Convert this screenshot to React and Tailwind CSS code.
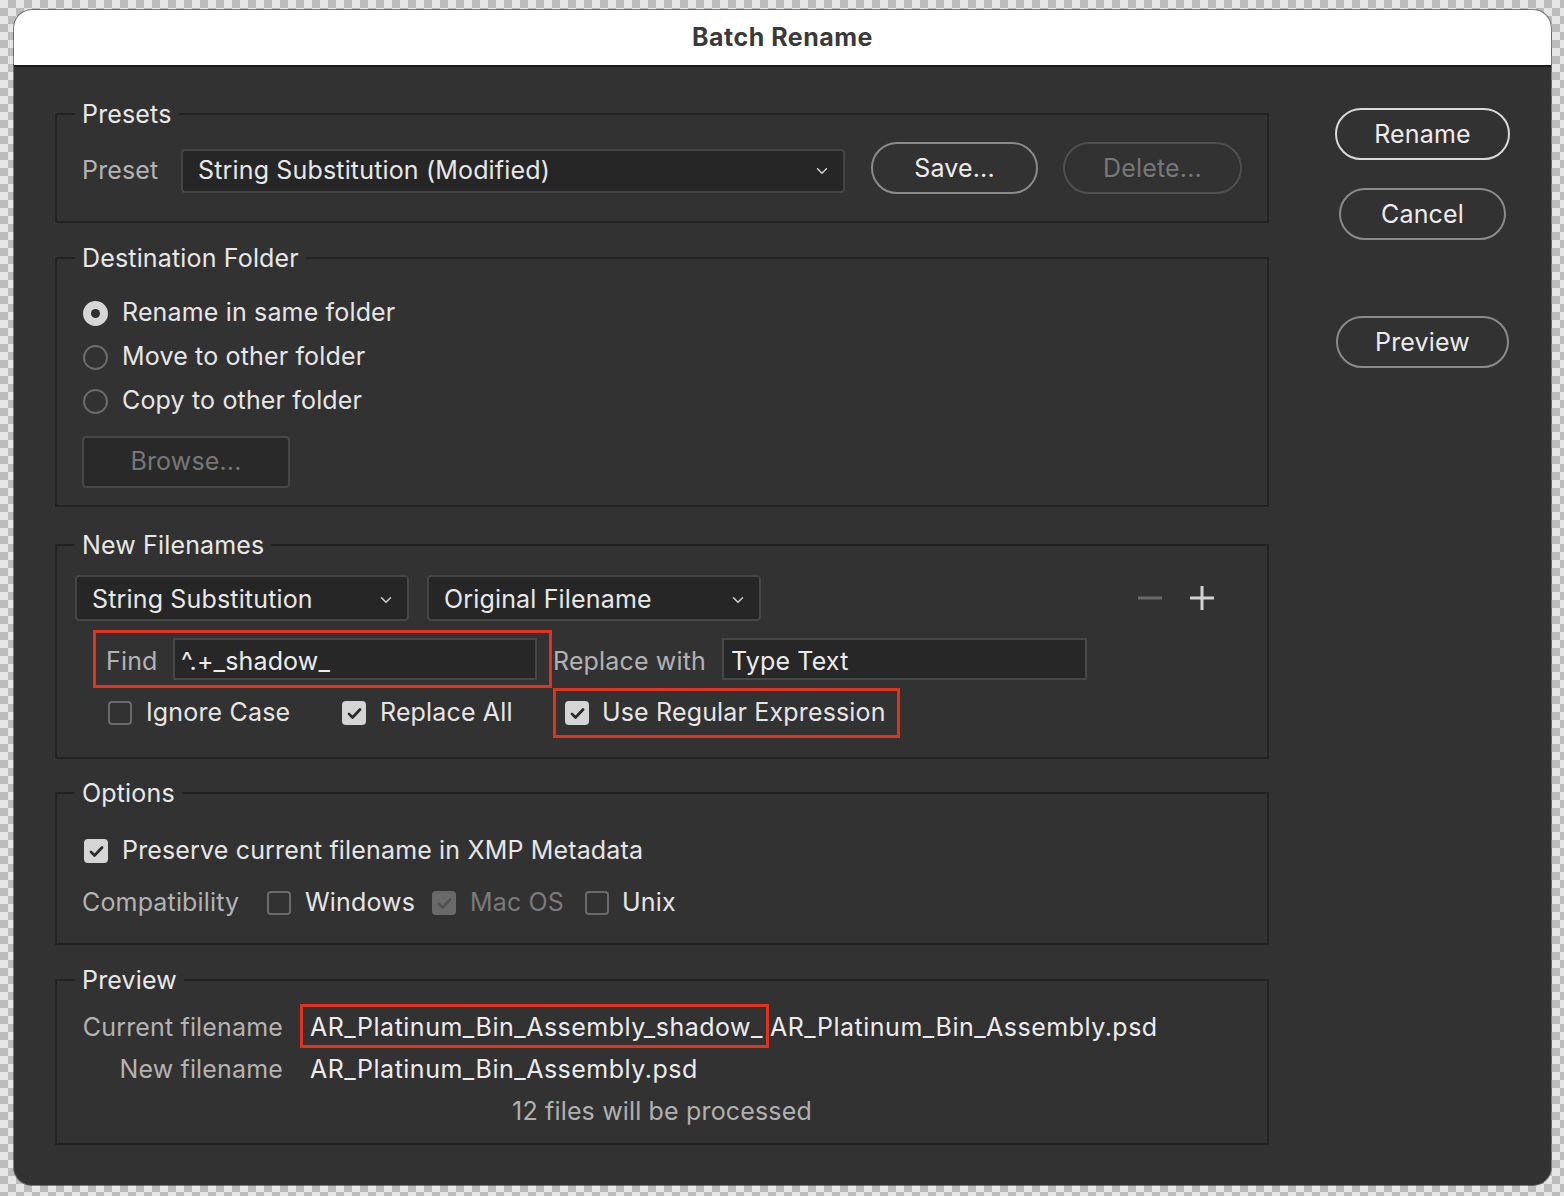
import { ChevronDown } from 'lucide-react'

function Pill({ children, tone = 'normal', className = '' }) {
  const tones = {
    strong:   'border-[#d9d9d9] text-[#ececec]',
    normal:   'border-[#8a8a8a] text-[#ececec]',
    disabled: 'border-[#4f4f4f] text-[#777777]',
  }
  return (
    <button className={`h-[52px] rounded-full border-2 text-[25px] leading-none ${tones[tone]} ${className}`}>
      {children}
    </button>
  )
}

function Select({ value, className = '' }) {
  return (
    <div className={`flex items-center justify-between rounded-[4px] border-2 border-[#454545] bg-[#262626] pl-[15px] pr-[12px] ${className}`}>
      <span className="text-[25px] text-[#e8e8e8]">{value}</span>
      <ChevronDown size={18} strokeWidth={2} className="text-[#cfcfcf]" />
    </div>
  )
}

function Check({ checked, disabled }) {
  if (!checked) return <span className="w-6 h-6 rounded-[4px] border-2 border-[#6a6a6a] shrink-0" />
  return (
    <span className={`w-6 h-6 rounded-[4px] flex items-center justify-center shrink-0 ${disabled ? 'bg-[#696969]' : 'bg-[#d5d5d5]'}`}>
      <svg viewBox="0 0 24 24" className="w-[19px] h-[19px]" fill="none" stroke={disabled ? '#525252' : '#2a2a2a'} strokeWidth="3.4" strokeLinecap="round" strokeLinejoin="round">
        <path d="M5 12.5l4.5 4.5L19 7" />
      </svg>
    </span>
  )
}

function Radio({ checked }) {
  if (checked) {
    return (
      <span className="w-[25px] h-[25px] rounded-full bg-[#d6d6d6] flex items-center justify-center shrink-0">
        <span className="w-[9px] h-[9px] rounded-full bg-[#2e2e2e]" />
      </span>
    )
  }
  return <span className="w-[25px] h-[25px] rounded-full border-2 border-[#6b6b6b] shrink-0" />
}

function Group({ title, className = '', children }) {
  return (
    <fieldset className={`border-2 border-[#232323] ${className}`}>
      <legend className="ml-[18px] px-[7px] text-[25px] leading-[28px] text-[#e8e8e8]">{title}</legend>
      {children}
    </fieldset>
  )
}

export default function App() {
  return (
    <div className="w-[1564px] h-[1196px] overflow-hidden pt-[10px] pl-[14px] bg-[image:repeating-conic-gradient(#bcbcbc_0%_25%,#e6e6e6_0%_50%)] bg-[length:16px_16px] font-['Inter','Noto_Sans',sans-serif] tracking-[0.01em]">
      <div className="w-[1537px] h-[1175px] rounded-[18px] overflow-hidden bg-[#323232] shadow-[0_0_0_1px_rgba(0,0,0,0.45)]">
        {/* Title bar */}
        <div className="h-[57px] bg-white border-b-2 border-[#1c1c1c] flex items-center justify-center">
          <span className="text-[25px] font-bold text-[#3a3a3a] tracking-[0.02em]">Batch Rename</span>
        </div>

        <div className="flex pl-[41px] pt-[33px]">
          {/* Left column */}
          <div className="w-[1214px] flex flex-col">
            <Group title="Presets" className="h-[123px]">
              <div className="flex items-center pl-[25px] pt-[14px]">
                <span className="w-[99px] text-[25px] text-[#b3b3b3]">Preset</span>
                <Select value="String Substitution (Modified)" className="w-[664px] h-[44px]" />
                <Pill className="ml-[26px] w-[167px] mb-[6px]">Save...</Pill>
                <Pill tone="disabled" className="ml-[25px] w-[179px] mb-[6px]">Delete...</Pill>
              </div>
            </Group>

            <Group title="Destination Folder" className="h-[263px] mt-[21px]">
              <div className="pl-[26px] pt-[19px] flex flex-col">
                {[
                  ['Rename in same folder', true],
                  ['Move to other folder', false],
                  ['Copy to other folder', false],
                ].map(([label, on]) => (
                  <div key={label} className="h-11 flex items-center gap-[14px]">
                    <Radio checked={on} />
                    <span className="text-[25px] text-[#e6e6e6]">{label}</span>
                  </div>
                ))}
                <button className="-ml-px mt-[13px] w-[208px] h-[52px] rounded-[4px] border-2 border-[#474747] bg-[#292929] text-[25px] text-[#777777]">
                  Browse...
                </button>
              </div>
            </Group>

            <Group title="New Filenames" className="h-[228px] mt-[24px]">
              <div className="pl-[18px] pt-[16px]">
                <div className="flex items-center h-[46px]">
                  <Select value="String Substitution" className="w-[334px] h-[46px] pt-[4px]" />
                  <Select value="Original Filename" className="ml-[18px] w-[334px] h-[46px] pt-[4px]" />
                  <svg viewBox="0 0 26 26" className="ml-[376px] w-[26px] h-[26px]">
                    <path d="M1 13h24" stroke="#6a6a6a" strokeWidth="3" />
                  </svg>
                  <svg viewBox="0 0 26 26" className="ml-[26px] w-[26px] h-[26px]">
                    <path d="M1 13h24M13 1v24" stroke="#d2d2d2" strokeWidth="3" />
                  </svg>
                </div>

                <div className="flex items-center mt-[9px]">
                  <div className="ml-[18px] w-[459px] h-[58px] border-[3px] border-[#e0321d] flex items-center pl-[10px]">
                    <span className="w-[67px] pt-[6px] text-[25px] text-[#b3b3b3]">Find</span>
                    <div className="w-[364px] h-[42px] border-2 border-[#474747] bg-[#272727] flex items-center pl-[6px] pt-[6px] text-[25px] text-[#ececec]">
                      ^.+_shadow_
                    </div>
                  </div>
                  <span className="ml-px w-[169px] pt-[6px] text-[25px] text-[#b3b3b3]">Replace with</span>
                  <div className="w-[365px] h-[42px] border-2 border-[#474747] bg-[#272727] flex items-center pl-[7px] pt-[6px] text-[25px] text-[#ececec]">
                    Type Text
                  </div>
                </div>

                <div className="flex items-center h-[50px]">
                  <div className="ml-[33px] w-[234px] flex items-center gap-[14px]">
                    <Check />
                    <span className="text-[25px] text-[#e6e6e6]">Ignore Case</span>
                  </div>
                  <div className="w-[211px] flex items-center gap-[14px]">
                    <Check checked />
                    <span className="text-[25px] text-[#e6e6e6]">Replace All</span>
                  </div>
                  <div className="w-[347px] h-[50px] border-[3px] border-[#e0321d] flex items-center gap-[13px] pl-[9px]">
                    <Check checked />
                    <span className="text-[25px] text-[#e6e6e6]">Use Regular Expression</span>
                  </div>
                </div>
              </div>
            </Group>

            <Group title="Options" className="h-[166px] mt-[20px]">
              <div className="pl-[27px] pt-[24px]">
                <div className="h-10 flex items-center gap-[14px]">
                  <Check checked />
                  <span className="text-[25px] text-[#e6e6e6]">Preserve current filename in XMP Metadata</span>
                </div>
                <div className="h-10 mt-[12px] -ml-[2px] flex items-center">
                  <span className="w-[185px] text-[25px] text-[#b3b3b3]">Compatibility</span>
                  <div className="w-[165px] flex items-center gap-[14px]">
                    <Check />
                    <span className="text-[25px] text-[#e6e6e6]">Windows</span>
                  </div>
                  <div className="w-[153px] flex items-center gap-[14px]">
                    <Check checked disabled />
                    <span className="text-[25px] text-[#7a7a7a]">Mac OS</span>
                  </div>
                  <div className="flex items-center gap-[13px]">
                    <Check />
                    <span className="text-[25px] text-[#e6e6e6]">Unix</span>
                  </div>
                </div>
              </div>
            </Group>

            <Group title="Preview" className="h-[179px] mt-[21px]">
              <div className="pl-[25px] pt-[10px]">
                <div className="h-[44px] flex items-center">
                  <span className="w-[201px] pt-[4px] text-right text-[25px] text-[#b3b3b3]">Current filename</span>
                  <span className="ml-[17px] h-[44px] border-[3px] border-[#e0321d] flex items-center pl-[7px] pr-[3px] pt-[4px] text-[25px] tracking-[0.02em] text-[#ececec]">
                    AR_Platinum_Bin_Assembly_shadow_
                  </span>
                  <span className="ml-px pt-[4px] text-[25px] tracking-[0.02em] text-[#ececec]">AR_Platinum_Bin_Assembly.psd</span>
                </div>
                <div className="h-10 mt-[2px] flex items-center">
                  <span className="w-[201px] text-right text-[25px] text-[#b3b3b3]">New filename</span>
                  <span className="ml-[27px] text-[25px] tracking-[0.02em] text-[#ececec]">AR_Platinum_Bin_Assembly.psd</span>
                </div>
              </div>
              <div className="h-10 mt-[2px] flex items-center justify-center text-[25px] text-[#b0b0b0]">
                12 files will be processed
              </div>
            </Group>
          </div>

          {/* Right column */}
          <div className="ml-[66px] w-[175px] flex flex-col items-center">
            <Pill tone="strong" className="mt-[8px] w-[175px]">Rename</Pill>
            <Pill className="mt-[28px] w-[167px]">Cancel</Pill>
            <Pill className="mt-[76px] w-[173px]">Preview</Pill>
          </div>
        </div>
      </div>
    </div>
  )
}
